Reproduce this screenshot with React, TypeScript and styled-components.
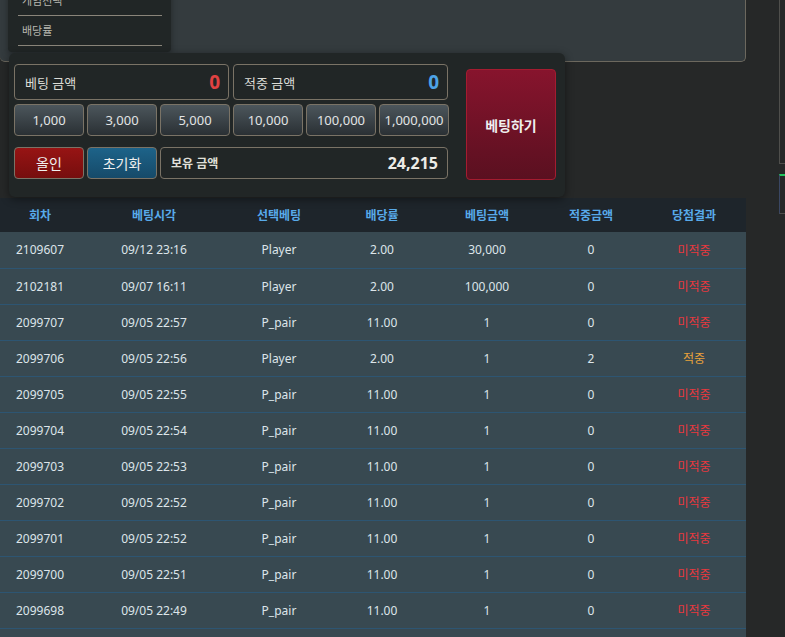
import React from 'react'
import styled, { createGlobalStyle } from 'styled-components'

const chips = ['1,000', '3,000', '5,000', '10,000', '100,000', '1,000,000']

type Row = {
  round: string
  time: string
  pick: string
  odds: string
  bet: string
  win: string
  hit: boolean
}

const rows: Row[] = [
  { round: '2109607', time: '09/12 23:16', pick: 'Player', odds: '2.00', bet: '30,000', win: '0', hit: false },
  { round: '2102181', time: '09/07 16:11', pick: 'Player', odds: '2.00', bet: '100,000', win: '0', hit: false },
  { round: '2099707', time: '09/05 22:57', pick: 'P_pair', odds: '11.00', bet: '1', win: '0', hit: false },
  { round: '2099706', time: '09/05 22:56', pick: 'Player', odds: '2.00', bet: '1', win: '2', hit: true },
  { round: '2099705', time: '09/05 22:55', pick: 'P_pair', odds: '11.00', bet: '1', win: '0', hit: false },
  { round: '2099704', time: '09/05 22:54', pick: 'P_pair', odds: '11.00', bet: '1', win: '0', hit: false },
  { round: '2099703', time: '09/05 22:53', pick: 'P_pair', odds: '11.00', bet: '1', win: '0', hit: false },
  { round: '2099702', time: '09/05 22:52', pick: 'P_pair', odds: '11.00', bet: '1', win: '0', hit: false },
  { round: '2099701', time: '09/05 22:52', pick: 'P_pair', odds: '11.00', bet: '1', win: '0', hit: false },
  { round: '2099700', time: '09/05 22:51', pick: 'P_pair', odds: '11.00', bet: '1', win: '0', hit: false },
  { round: '2099698', time: '09/05 22:49', pick: 'P_pair', odds: '11.00', bet: '1', win: '0', hit: false },
  { round: '2099697', time: '09/05 22:48', pick: 'P_pair', odds: '11.00', bet: '1', win: '0', hit: false },
]

const columns = [
  { title: '회차', width: 80 },
  { title: '베팅시각', width: 148 },
  { title: '선택베팅', width: 102 },
  { title: '배당률', width: 104 },
  { title: '베팅금액', width: 106 },
  { title: '적중금액', width: 102 },
  { title: '당첨결과', width: 104 },
]

export default function App() {
  return (
    <>
      <GlobalStyle />
      <Page>
        <Main>
          <TopPanel>
            <Dropdown>
              <MenuItem>게임선택</MenuItem>
              <MenuItem>배당률</MenuItem>
            </Dropdown>
          </TopPanel>

          <BetPanel>
            <Controls>
              <AmountRow>
                <AmountBox>
                  <AmountLabel>베팅 금액</AmountLabel>
                  <AmountValue $tone="red">0</AmountValue>
                </AmountBox>
                <AmountBox>
                  <AmountLabel>적중 금액</AmountLabel>
                  <AmountValue $tone="blue">0</AmountValue>
                </AmountBox>
              </AmountRow>
              <ChipRow>
                {chips.map(c => (
                  <ChipButton key={c}>{c}</ChipButton>
                ))}
              </ChipRow>
              <ActionRow>
                <ActionButton $variant="allin">올인</ActionButton>
                <ActionButton $variant="reset">초기화</ActionButton>
                <BalanceBox>
                  <BalanceLabel>보유 금액</BalanceLabel>
                  <BalanceValue>24,215</BalanceValue>
                </BalanceBox>
              </ActionRow>
            </Controls>
            <PlaceButton>베팅하기</PlaceButton>
          </BetPanel>

          <HistoryTable>
            <colgroup>
              {columns.map(c => (
                <col key={c.title} style={{ width: c.width }} />
              ))}
            </colgroup>
            <thead>
              <tr>
                {columns.map(c => (
                  <HeadCell key={c.title}>{c.title}</HeadCell>
                ))}
              </tr>
            </thead>
            <tbody>
              {rows.map(r => (
                <tr key={r.round}>
                  <Cell>{r.round}</Cell>
                  <Cell>{r.time}</Cell>
                  <Cell>{r.pick}</Cell>
                  <Cell>{r.odds}</Cell>
                  <Cell>{r.bet}</Cell>
                  <Cell>{r.win}</Cell>
                  <ResultCell $hit={r.hit}>{r.hit ? '적중' : '미적중'}</ResultCell>
                </tr>
              ))}
            </tbody>
          </HistoryTable>
        </Main>

        <SideRail>
          <RailBox />
          <RailTab />
        </SideRail>
      </Page>
    </>
  )
}

const GlobalStyle = createGlobalStyle`
  html, body {
    margin: 0;
    padding: 0;
    background: #262828;
    font-family: "Noto Sans", "Noto Sans CJK KR", sans-serif;
    overflow: hidden;
  }
  * {
    box-sizing: border-box;
  }
`

const Page = styled.div`
  display: flex;
  align-items: flex-start;
  height: 637px;
  overflow: hidden;
`

const Main = styled.div`
  width: 746px;
  flex-shrink: 0;
`

const TopPanel = styled.div`
  position: relative;
  height: 62px;
  background: #343b3e;
  border-right: 1px solid #6c685e;
  border-bottom: 1px solid #6c685e;
  border-radius: 0 0 5px 5px;
`

const Dropdown = styled.div`
  position: absolute;
  top: -14px;
  left: 8px;
  width: 163px;
  padding: 0 9px 6px 10px;
  background: #212626;
  border-radius: 0 0 4px 4px;
  box-shadow: 0 2px 6px rgba(0, 0, 0, 0.35);
  z-index: 1;
`

const MenuItem = styled.div`
  height: 30px;
  line-height: 30px;
  padding-left: 4px;
  font-size: 11px;
  color: #b8b8b0;
  border-bottom: 1px solid #8a857a;
`

const BetPanel = styled.div`
  position: relative;
  z-index: 2;
  display: flex;
  gap: 17px;
  width: 556px;
  height: 144px;
  margin: -9px 0 0 9px;
  padding: 11px 9px 18px 5px;
  background: #212626;
  border-radius: 6px;
  box-shadow: 0 2px 8px rgba(0, 0, 0, 0.45);
`

const Controls = styled.div`
  display: flex;
  flex-direction: column;
  width: 435px;
`

const AmountRow = styled.div`
  display: flex;
  gap: 4px;
`

const AmountBox = styled.div`
  display: flex;
  align-items: center;
  justify-content: space-between;
  width: 215px;
  height: 36px;
  padding: 0 8px 0 10px;
  border: 1px solid #7a7366;
  border-radius: 4px;
`

const AmountLabel = styled.span`
  font-size: 13px;
  color: #dcdcd6;
`

const AmountValue = styled.span<{ $tone: 'red' | 'blue' }>`
  font-size: 19px;
  font-weight: 700;
  color: ${p => (p.$tone === 'red' ? '#e04242' : '#4da3e6')};
`

const ChipRow = styled.div`
  display: flex;
  gap: 3px;
  margin-top: 4px;
`

const ChipButton = styled.button`
  width: 70px;
  height: 32px;
  padding: 0;
  font-family: inherit;
  font-size: 13px;
  color: #e2e4e4;
  background: linear-gradient(#4c565c, #2a3034);
  border: 1px solid #7a7366;
  border-radius: 4px;
  cursor: pointer;
`

const ActionRow = styled.div`
  display: flex;
  gap: 3px;
  margin-top: 11px;
`

const ActionButton = styled.button<{ $variant: 'allin' | 'reset' }>`
  width: 70px;
  height: 32px;
  padding: 0;
  font-family: inherit;
  font-size: 14px;
  color: #f0f0f0;
  background: ${p =>
    p.$variant === 'allin'
      ? 'linear-gradient(#971414, #760e0e)'
      : 'linear-gradient(#1d6389, #164a69)'};
  border: 1px solid #7a7366;
  border-radius: 4px;
  cursor: pointer;
`

const BalanceBox = styled.div`
  display: flex;
  align-items: center;
  justify-content: space-between;
  width: 288px;
  height: 32px;
  padding: 0 9px 0 10px;
  border: 1px solid #7a7366;
  border-radius: 4px;
`

const BalanceLabel = styled.span`
  font-size: 12px;
  font-weight: 700;
  color: #e0e0da;
`

const BalanceValue = styled.span`
  font-size: 16px;
  font-weight: 700;
  color: #ecece6;
`

const PlaceButton = styled.button`
  width: 90px;
  height: 111px;
  margin-top: 5px;
  padding: 0;
  font-family: inherit;
  font-size: 14px;
  font-weight: 700;
  color: #eeeeee;
  background: linear-gradient(#87142d, #5a1020);
  border: 1px solid #a41c30;
  border-radius: 4px;
  cursor: pointer;
`

const HistoryTable = styled.table`
  width: 746px;
  margin-top: 1px;
  border-collapse: collapse;
  table-layout: fixed;
`

const HeadCell = styled.th`
  height: 34px;
  padding: 0;
  font-size: 12px;
  font-weight: 700;
  color: #58aaea;
  background: #1e252b;
  text-align: center;
`

const Cell = styled.td`
  height: 36px;
  padding: 0;
  font-size: 12px;
  color: #dde5ea;
  background: #384951;
  border-bottom: 1px solid #2d5572;
  text-align: center;
`

const ResultCell = styled(Cell)<{ $hit: boolean }>`
  color: ${p => (p.$hit ? '#e9a23b' : '#e8383e')};
`

const SideRail = styled.div`
  display: flex;
  flex-direction: column;
  gap: 10px;
  width: 6px;
  margin-left: 33px;
`

const RailBox = styled.div`
  height: 164px;
  border-left: 1px solid #4f4f4c;
  border-bottom: 1px solid #4f4f4c;
`

const RailTab = styled.div`
  height: 40px;
  border-top: 2px solid #22c55e;
  border-left: 1px solid #3a4763;
  border-bottom: 1px solid #4f4f4c;
`
